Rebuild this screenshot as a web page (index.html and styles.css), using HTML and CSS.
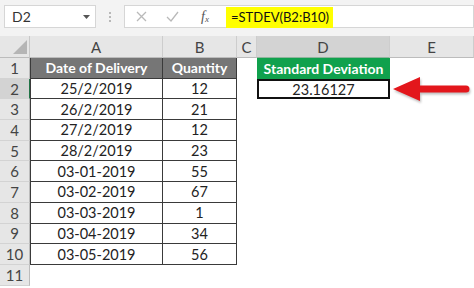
FILE: index.html
```html
<!DOCTYPE html>
<html lang="en">
<head>
  <meta charset="UTF-8">
  <title>STDEV in Excel</title>
  <link rel="stylesheet" href="styles.css">
</head>
<body>

<div class="toolbar">
  <div class="namebox">
    <span>D2</span>
    <svg class="caret" width="7" height="4" viewBox="0 0 7 4"><path d="M0 0h7L3.5 4z" fill="#555"/></svg>
  </div>
  <div class="grip"><i></i><i></i><i></i></div>
  <div class="fxbox">
    <svg class="ico" width="11" height="11" viewBox="0 0 11 11"><path d="M1 1l9 9M10 1l-9 9" stroke="#b9b9b9" stroke-width="1.3"/></svg>
    <svg class="ico" width="13" height="11" viewBox="0 0 13 11"><path d="M1 6l4 4 7-9" stroke="#b9b9b9" stroke-width="1.3" fill="none"/></svg>
    <span class="fx">f<sub>x</sub></span>
  </div>
  <div class="formula"><span class="hl">=STDEV(B2:B10)</span></div>
</div>

<div class="sheet">
  <!-- column headers -->
  <div class="corner"><svg width="14" height="14" viewBox="0 0 14 14"><path d="M14 0v14H0z" fill="#b5b5b5"/></svg></div>
  <div class="colh">A</div>
  <div class="colh">B</div>
  <div class="colh">C</div>
  <div class="colh sel">D</div>
  <div class="colh">E</div>

  <div class="rowh">1</div>
  <div class="th first">Date of Delivery</div>
  <div class="th">Quantity</div>
  <div class="cell"></div>
  <div class="green">Standard Deviation</div>
  <div class="cell"></div>

  <div class="rowh sel">2</div>
  <div class="td first">25/2/2019</div>
  <div class="td">12</div>
  <div class="cell"></div>
  <div class="cell result">23.16127</div>
  <div class="cell"></div>

  <div class="rowh">3</div>
  <div class="td first">26/2/2019</div>
  <div class="td">21</div>
  <div class="cell"></div><div class="cell"></div><div class="cell"></div>

  <div class="rowh">4</div>
  <div class="td first">27/2/2019</div>
  <div class="td">12</div>
  <div class="cell"></div><div class="cell"></div><div class="cell"></div>

  <div class="rowh">5</div>
  <div class="td first">28/2/2019</div>
  <div class="td">23</div>
  <div class="cell"></div><div class="cell"></div><div class="cell"></div>

  <div class="rowh">6</div>
  <div class="td first">03-01-2019</div>
  <div class="td">55</div>
  <div class="cell"></div><div class="cell"></div><div class="cell"></div>

  <div class="rowh">7</div>
  <div class="td first">03-02-2019</div>
  <div class="td">67</div>
  <div class="cell"></div><div class="cell"></div><div class="cell"></div>

  <div class="rowh">8</div>
  <div class="td first">03-03-2019</div>
  <div class="td">1</div>
  <div class="cell"></div><div class="cell"></div><div class="cell"></div>

  <div class="rowh">9</div>
  <div class="td first">03-04-2019</div>
  <div class="td">34</div>
  <div class="cell"></div><div class="cell"></div><div class="cell"></div>

  <div class="rowh">10</div>
  <div class="td first">03-05-2019</div>
  <div class="td">56</div>
  <div class="cell"></div><div class="cell"></div><div class="cell"></div>

  <div class="rowh">11</div>
  <div class="cell"></div><div class="cell"></div><div class="cell"></div><div class="cell"></div><div class="cell"></div>
</div>

<!-- callout arrow pointing at D2 -->
<svg class="arrow" width="84" height="32" viewBox="0 0 84 32">
  <path d="M3 15L30 3V11.5H76A3.5 3.5 0 0 1 76 18.5H30V27Z" fill="#e3171c"/>
</svg>

</body>
</html>
```

FILE: styles.css
```css
body { margin:0; background:#fff; font-family:Lato, "Open Sans", sans-serif; color:#222; position:relative; width:474px; height:288px; overflow:hidden; }

/* formula bar */
.toolbar { display:flex; align-items:flex-start; height:36px; box-sizing:border-box; padding:5px 0 0 4px; background:#f3f3f3; }
.namebox { width:92px; height:23px; box-sizing:border-box; background:#fff; border:1px solid #d6d6d6; display:flex; align-items:center; justify-content:space-between; padding:0 5px 0 7px; font-size:14px; color:#333; }
.caret { margin-top:1px; }
.grip { width:28px; height:23px; display:flex; flex-direction:column; align-items:center; justify-content:center; gap:2px; }
.grip i { width:2px; height:2px; background:#b8b8b8; }
.fxbox { width:100px; height:23px; box-sizing:border-box; background:#fff; border:1px solid #d6d6d6; border-right:none; display:flex; align-items:center; padding-left:11px; gap:19px; }
.fx { font-family:"Liberation Serif", serif; font-style:italic; font-size:14px; color:#555; margin-left:3px; }
.fx sub { font-size:9px; vertical-align:-1px; }
.formula { flex:1; height:23px; box-sizing:border-box; background:#fff; border:1px solid #d6d6d6; border-left:none; padding-left:2px; }
.hl { display:inline-block; height:21px; line-height:21px; background:#ffff00; padding:0 4px 0 5px; font-size:13px; color:#111; }

/* grid */
.sheet { display:grid; grid-template-columns:30px 133px 74px 20px 133px 84px; grid-template-rows:22px repeat(11, 20.7px); font-size:14.5px; }
.sheet > div { box-sizing:border-box; display:flex; align-items:center; justify-content:center; white-space:nowrap; }
.corner { background:#e6e6e6; border-right:1px solid #c8c8c8; border-bottom:1px solid #bcbcbc; align-items:flex-end !important; justify-content:flex-end !important; padding:0 2px 3px 0; }
.colh { background:#e6e6e6; border-right:1px solid #cdcdcd; border-bottom:1px solid #bcbcbc; color:#444; font-size:15px; }
.rowh { background:#e6e6e6; border-right:1px solid #bcbcbc; border-bottom:1px solid #d3d3d3; color:#444; font-size:15px; }
.colh.sel { background:#d3d3d3; border-bottom:1px solid #8fb59d; }
.rowh.sel { background:#d3d3d3; border-right:1px solid #217346; }
.th { background:#767676; color:#fff; font-weight:bold; font-size:14px; border-right:1px solid #3a3a3a; border-bottom:1px solid #3a3a3a; }
.td { border-right:1px solid #3a3a3a; border-bottom:1px solid #3a3a3a; color:#222; }
.first { border-left:1px solid #3a3a3a; }
.green { background:#10a14d; color:#fff; font-weight:bold; font-size:14px; }
.result { border:2px solid #111; color:#222; }

/* callout */
.arrow { position:absolute; left:390px; top:74px; filter:drop-shadow(1px 2px 1px rgba(0,0,0,.25)); }
```
